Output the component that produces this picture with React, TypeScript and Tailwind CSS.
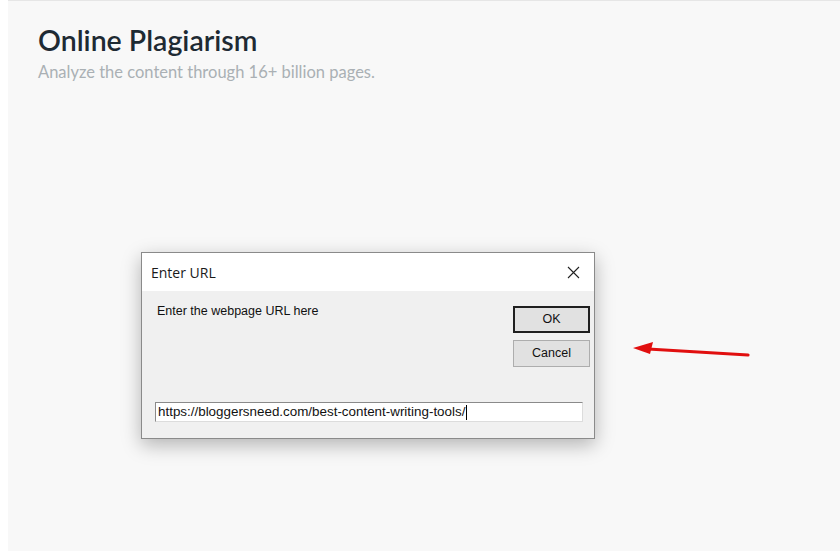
export default function App() {
  return (
    <div className="relative w-[840px] h-[551px] bg-white overflow-hidden">
      {/* page area */}
      <div className="ml-[8px] h-full border-t border-[#e6e6e6] bg-[#f8f8f8] pl-[30px] pt-[21px]">
        <h1 className="text-[28.5px] leading-[37px] font-semibold text-[#1e2a33] font-['Lato',sans-serif]">
          Online Plagiarism
        </h1>
        <p className="mt-[3px] text-[16.5px] leading-[20px] text-[#aab0b4] font-['Lato',sans-serif]">
          Analyze the content through 16+ billion pages.
        </p>
      </div>

      {/* prompt dialog */}
      <div className="absolute left-[141px] top-[252px] w-[454px] h-[187px] border border-[#8a8a8a] bg-[#f0f0f0] shadow-[0_6px_18px_rgba(0,0,0,0.28)] flex flex-col">
        <div className="h-[38px] bg-white flex items-center justify-between pl-[9px] pr-[14px]">
          <span className="text-[14px] text-[#1a1a1a] font-['Open_Sans',sans-serif]">Enter URL</span>
          <svg width="13" height="13" viewBox="0 0 13 13" className="text-[#222]">
            <path d="M1 1L12 12M12 1L1 12" stroke="currentColor" strokeWidth="1.1" />
          </svg>
        </div>
        <div className="flex-1 relative font-['Liberation_Sans',Arial,sans-serif] text-[12.5px] text-[#111]">
          <div className="flex justify-between pl-[15px] pr-[4px] pt-[13px]">
            <span className="leading-[15px]">Enter the webpage URL here</span>
            <div className="flex flex-col gap-[7px] pt-[2px]">
              <button className="w-[77px] h-[27px] bg-[#e1e1e1] border-2 border-[#1f1f1f] flex items-center justify-center">
                OK
              </button>
              <button className="w-[77px] h-[27px] bg-[#e1e1e1] border border-[#adadad] flex items-center justify-center">
                Cancel
              </button>
            </div>
          </div>
          <div className="absolute left-[13px] top-[111px] w-[428px] h-[20px] bg-white border border-[#8a8a8a] border-r-[#dcdcdc] border-b-[#dcdcdc] flex items-center pl-[2px] text-[13.4px]">
            <span>https://bloggersneed.com/best-content-writing-tools/</span>
            <span className="w-[1px] h-[15px] bg-black ml-[1px]" />
          </div>
        </div>
      </div>

      {/* red arrow annotation */}
      <svg className="absolute left-[628px] top-[338px]" width="130" height="24" viewBox="0 0 130 24">
        <path d="M120 17L20 11" stroke="#e10f0f" strokeWidth="3.2" strokeLinecap="round" />
        <path d="M5 10L25 4L22 16Z" fill="#e10f0f" />
      </svg>
    </div>
  )
}
